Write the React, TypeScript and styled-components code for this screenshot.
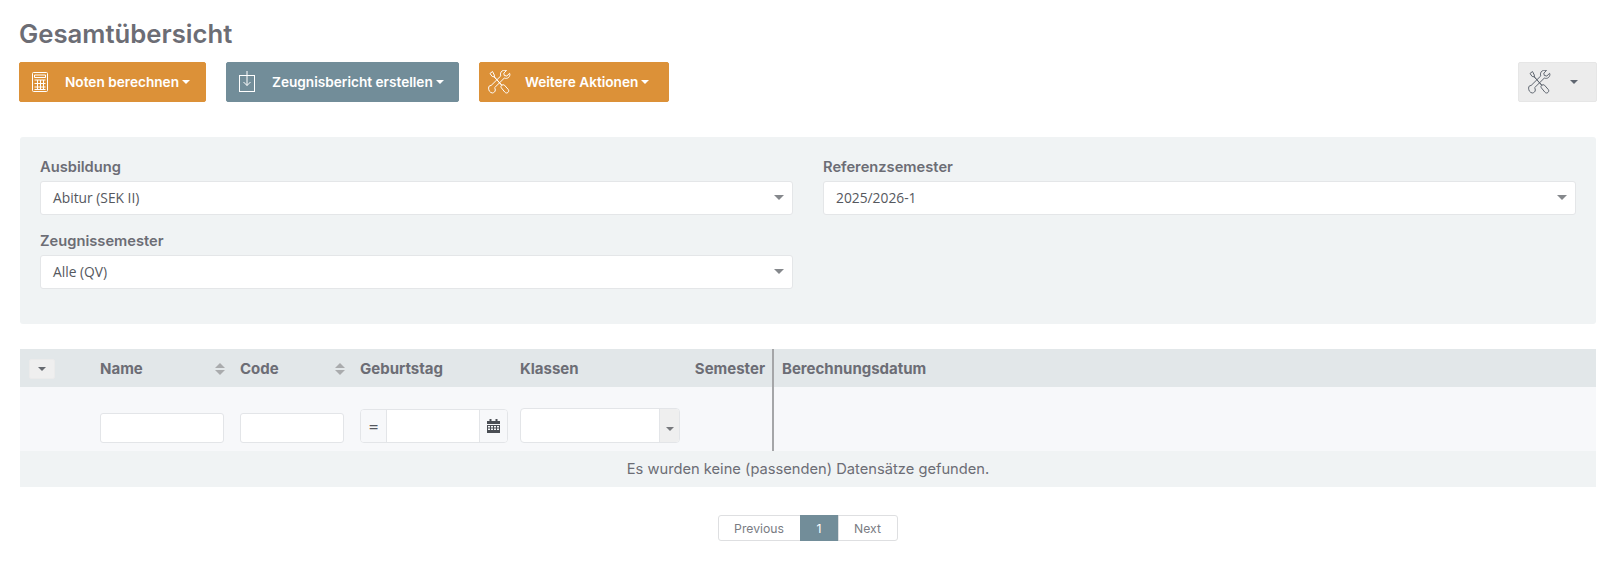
import React from 'react';
import styled, {createGlobalStyle} from 'styled-components';

const GlobalStyle = createGlobalStyle`
    html, body {
        margin: 0;
        padding: 0;
        background: #fff;
        font-family: "Inter", "Liberation Sans", sans-serif;
        color: #6c6d75;
    }
    * { box-sizing: border-box; }
`;

const Page = styled.div`
    width: 1621px;
    height: 571px;
    overflow: hidden;
    padding: 18px 25px 0 20px;
`;

const Title = styled.h1`
    margin: 0 0 0 -1px;
    font-size: 25.7px;
    line-height: 32px;
    font-weight: 600;
    color: #6c6d75;
`;

const Toolbar = styled.div`
    display: flex;
    align-items: center;
    margin: 12px -1px 0 -1px;
`;

const ActionButton = styled.button<{$tone: 'orange' | 'slate'; $width: number}>`
    display: flex;
    align-items: center;
    width: ${({$width}) => $width}px;
    height: 40px;
    margin-right: 20px;
    padding: 0 0 0 8px;
    border: 1px solid ${({$tone}) => ($tone === 'orange' ? '#dc9138' : '#728d99')};
    border-radius: 2px;
    background: ${({$tone}) => ($tone === 'orange' ? '#dc9138' : '#728d99')};
    color: #fff;
    font: 600 13.65px "Inter", sans-serif;
    white-space: nowrap;
`;

const ButtonIcon = styled.svg<{$flush?: boolean}>`
    flex: none;
    width: 24px;
    height: 24px;
    margin-right: ${({$flush}) => ($flush ? 0 : 13)}px;
    fill: none;
    stroke: currentColor;
    stroke-width: 1;
`;

const Caret = styled.span`
    display: inline-block;
    margin-left: 3px;
    border-top: 4px solid currentColor;
    border-left: 4px solid transparent;
    border-right: 4px solid transparent;
`;

const ToolsButton = styled.button`
    display: flex;
    align-items: center;
    width: 79px;
    height: 40px;
    margin-left: auto;
    padding: 0 0 0 9px;
    border: 1px solid #e6e6e6;
    border-radius: 2px;
    background: #ececec;
    color: #5f6670;
`;

const ToolsCaret = styled(Caret)`
    margin-left: 18px;
`;

const FilterPanel = styled.section`
    display: grid;
    grid-template-columns: 753px 753px;
    column-gap: 30px;
    align-content: start;
    height: 187px;
    margin-top: 35px;
    padding: 21px 20px 0;
    background: #f0f3f4;
    border-radius: 3px;
`;

const Field = styled.div`
    height: 74px;
`;

const FieldLabel = styled.label`
    display: block;
    height: 23px;
    font-size: 14.7px;
    line-height: 18px;
    font-weight: 600;
    color: #6c6d75;
`;

const SelectBox = styled.div`
    display: flex;
    align-items: center;
    justify-content: space-between;
    height: 34px;
    padding: 0 12px 2px;
    background: #fff;
    border: 1px solid #e4e6e8;
    border-radius: 3px;
    font-family: "Open Sans", sans-serif;
    font-size: 13.8px;
    color: #55585e;
`;

const SelectCaret = styled.span`
    border-top: 5px solid #85888c;
    border-left: 5px solid transparent;
    border-right: 5px solid transparent;
    margin-right: -4px;
`;

const Table = styled.section`
    margin-top: 25px;
`;

const gridColumns = '80px 140px 120px 160px 252px 1fr';

const HeadRow = styled.div`
    display: grid;
    grid-template-columns: ${gridColumns};
    align-items: center;
    height: 38px;
    background: #e2e7e9;
`;

const HeadCell = styled.div<{$divided?: boolean}>`
    display: flex;
    align-items: center;
    justify-content: space-between;
    height: 100%;
    padding-top: 1px;
    padding-right: 15px;
    padding-left: ${({$divided}) => ($divided ? '8px' : '0')};
    border-left: ${({$divided}) => ($divided ? '2px solid #a5a6a8' : '0')};
    font-size: 15px;
    font-weight: 700;
    color: #6c6d75;
`;

const PairedHeadCell = styled(HeadCell)`
    padding-right: 7px;
`;

const ToggleCell = styled.div`
    height: 100%;
    padding: 10px 0 0 9px;
`;

const RowToggle = styled.button`
    display: flex;
    align-items: center;
    justify-content: center;
    width: 26px;
    height: 20px;
    padding: 0;
    border: 1px solid #ebebeb;
    border-radius: 2px;
    background: #efefef;
    color: #666a70;
`;

const TinyCaret = styled.span`
    border-top: 4px solid currentColor;
    border-left: 4px solid transparent;
    border-right: 4px solid transparent;
`;

const SortArrows = styled.span`
    display: flex;
    flex-direction: column;
    gap: 2px;

    &::before, &::after {
        content: '';
        border-left: 5px solid transparent;
        border-right: 5px solid transparent;
    }
    &::before { border-bottom: 5px solid #a9abad; }
    &::after { border-top: 5px solid #a9abad; }
`;

const FilterRow = styled.div`
    display: grid;
    grid-template-columns: ${gridColumns};
    height: 64px;
    background: #f7f8fa;
`;

const FilterCell = styled.div<{$divided?: boolean; $top?: number}>`
    padding-top: ${({$top}) => $top ?? 0}px;
    border-left: ${({$divided}) => ($divided ? '2px solid #a5a6a8' : '0')};
`;

const TextFilter = styled.input<{$width: number}>`
    display: block;
    width: ${({$width}) => $width}px;
    height: 30px;
    padding: 0 8px;
    background: #fff;
    border: 1px solid #e3e5e8;
    border-radius: 3px;
    outline: none;
`;

const DateFilter = styled.div`
    display: flex;
    width: 148px;
    height: 34px;
    background: #fff;
    border: 1px solid #e3e5e8;
    border-radius: 4px;
    overflow: hidden;
`;

const DateOperator = styled.div`
    display: flex;
    align-items: center;
    justify-content: center;
    width: 26px;
    background: #f7f8fa;
    border-right: 1px solid #e3e5e8;
    font-family: "Open Sans", sans-serif;
    font-size: 17px;
    color: #55585e;
`;

const DateInput = styled.div`
    flex: 1;
`;

const DateIcon = styled.div`
    display: flex;
    align-items: center;
    justify-content: center;
    width: 28px;
    background: #f7f8fa;
    border-left: 1px solid #e3e5e8;
    color: #4a4e54;
`;

const ComboFilter = styled.div`
    display: flex;
    width: 160px;
    height: 35px;
    background: #fff;
    border: 1px solid #e3e5e8;
    border-radius: 4px;
    overflow: hidden;
`;

const ComboInput = styled.div`
    flex: 1;
`;

const ComboButton = styled.div`
    display: flex;
    align-items: flex-end;
    justify-content: center;
    width: 20px;
    padding-bottom: 11px;
    background: #efefef;
    border-left: 1px solid #e3e5e8;
    color: #77797d;
`;

const EmptyRow = styled.div`
    height: 36px;
    background: #f0f3f4;
    font-size: 14.7px;
    line-height: 36px;
    text-align: center;
    color: #6c6d75;
`;

const Pagination = styled.nav`
    display: flex;
    justify-content: center;
    margin-top: 28px;
`;

const PageItem = styled.button<{$active?: boolean; $width: number}>`
    width: ${({$width}) => $width}px;
    height: 26px;
    padding: 0;
    margin-left: -1px;
    border: 1px solid ${({$active}) => ($active ? '#728d99' : '#dedfe1')};
    background: ${({$active}) => ($active ? '#728d99' : '#fff')};
    color: ${({$active}) => ($active ? '#fff' : '#7a7c83')};
    font: 400 12.2px "Inter", sans-serif;

    &:first-child { border-radius: 3px 0 0 3px; }
    &:last-child { border-radius: 0 3px 3px 0; }
`;

function CalculatorIcon() {
    return (
        <ButtonIcon viewBox="0 0 24 24">
            <rect x="4.5" y="2.5" width="15" height="19" rx="1" />
            <path d="M6.5 5h11v2.500h-11zM6.500 10h11M6.500 13.500h11M6.500 17h11M6.500 19.500h11M9.500 10v9.500M12.500 10v9.500M15.500 10v9.500" />
        </ButtonIcon>
    );
}

function DownloadIcon() {
    return (
        <ButtonIcon viewBox="0 0 24 24">
            <rect x="4.5" y="5.5" width="15" height="16" />
            <path d="M12 1v14.500M8.500 12l3.500 3.500 3.500-3.500" />
        </ButtonIcon>
    );
}

function ToolsIcon({flush}: {flush?: boolean}) {
    return (
        <ButtonIcon viewBox="0 0 24 24" $flush={flush}>
            <path d="M4.500 1.500 2 3.500l2.200 3 2 .3 7.400 8.400-.7 1.300.4 1.300 3.600 4.400c1 1 2 1.100 3.100.2.900-.9 1-2 .2-3l-3.800-4.300-1.300-.4-1.200.5L6.400 7l-.1-2z" />
            <path d="M21.600 3.300 18.800 6l-2.500-.5-.5-2.400 2.700-2.600c-2.200-.7-4.300-.1-5.300 1.400-.9 1.300-.9 2.700-.4 4L3 15.600c-1.500-.4-2.300.9-2.400 2.500-.1 2.200 1.300 4.600 3.700 4.900 1.600-.2 3-1.300 3-3 0-.9-.3-1.700-.7-2.300l9.700-9.600c1.400.5 3 .4 4.200-.6 1.400-1.300 1.700-3.100 1.100-4.200z" />
        </ButtonIcon>
    );
}

function CalendarGlyph() {
    return (
        <svg width="13" height="14" viewBox="0 0 13 14" fill="currentColor">
            <path d="M0 2h2.500V0h2v2h4V0h2v2H13v3H0z" />
            <path d="M0 6h13v8H0zM1 7v1.500h2V7zm3 0v1.500h2V7zm3 0v1.500h2V7zm3 0v1.500h2V7zM1 9.500V11h2V9.500zm3 0V11h2V9.500zm3 0V11h2V9.500zm3 0V11h2V9.500z" fillRule="evenodd" />
        </svg>
    );
}

export default function App() {
    return (
        <Page>
            <GlobalStyle />
            <Title>Gesamtübersicht</Title>
            <Toolbar>
                <ActionButton $tone="orange" $width={187}>
                    <CalculatorIcon />
                    Noten berechnen
                    <Caret />
                </ActionButton>
                <ActionButton $tone="slate" $width={233}>
                    <DownloadIcon />
                    Zeugnisbericht erstellen
                    <Caret />
                </ActionButton>
                <ActionButton $tone="orange" $width={190}>
                    <ToolsIcon />
                    Weitere Aktionen
                    <Caret />
                </ActionButton>
                <ToolsButton>
                    <ToolsIcon flush />
                    <ToolsCaret />
                </ToolsButton>
            </Toolbar>

            <FilterPanel>
                <Field>
                    <FieldLabel>Ausbildung</FieldLabel>
                    <SelectBox>
                        Abitur (SEK II)
                        <SelectCaret />
                    </SelectBox>
                </Field>
                <Field>
                    <FieldLabel>Referenzsemester</FieldLabel>
                    <SelectBox>
                        2025/2026-1
                        <SelectCaret />
                    </SelectBox>
                </Field>
                <Field>
                    <FieldLabel>Zeugnissemester</FieldLabel>
                    <SelectBox>
                        Alle (QV)
                        <SelectCaret />
                    </SelectBox>
                </Field>
            </FilterPanel>

            <Table>
                <HeadRow>
                    <ToggleCell>
                        <RowToggle>
                            <TinyCaret />
                        </RowToggle>
                    </ToggleCell>
                    <HeadCell>
                        Name
                        <SortArrows />
                    </HeadCell>
                    <HeadCell>
                        Code
                        <SortArrows />
                    </HeadCell>
                    <HeadCell>Geburtstag</HeadCell>
                    <PairedHeadCell>
                        <span>Klassen</span>
                        <span>Semester</span>
                    </PairedHeadCell>
                    <HeadCell $divided>Berechnungsdatum</HeadCell>
                </HeadRow>
                <FilterRow>
                    <FilterCell />
                    <FilterCell $top={26}>
                        <TextFilter $width={124} />
                    </FilterCell>
                    <FilterCell $top={26}>
                        <TextFilter $width={104} />
                    </FilterCell>
                    <FilterCell $top={22}>
                        <DateFilter>
                            <DateOperator>=</DateOperator>
                            <DateInput />
                            <DateIcon>
                                <CalendarGlyph />
                            </DateIcon>
                        </DateFilter>
                    </FilterCell>
                    <FilterCell $top={21}>
                        <ComboFilter>
                            <ComboInput />
                            <ComboButton>
                                <TinyCaret />
                            </ComboButton>
                        </ComboFilter>
                    </FilterCell>
                    <FilterCell $divided />
                </FilterRow>
                <EmptyRow>Es wurden keine (passenden) Datensätze gefunden.</EmptyRow>
            </Table>

            <Pagination>
                <PageItem $width={83}>Previous</PageItem>
                <PageItem $width={39} $active>
                    1
                </PageItem>
                <PageItem $width={60}>Next</PageItem>
            </Pagination>
        </Page>
    );
}
